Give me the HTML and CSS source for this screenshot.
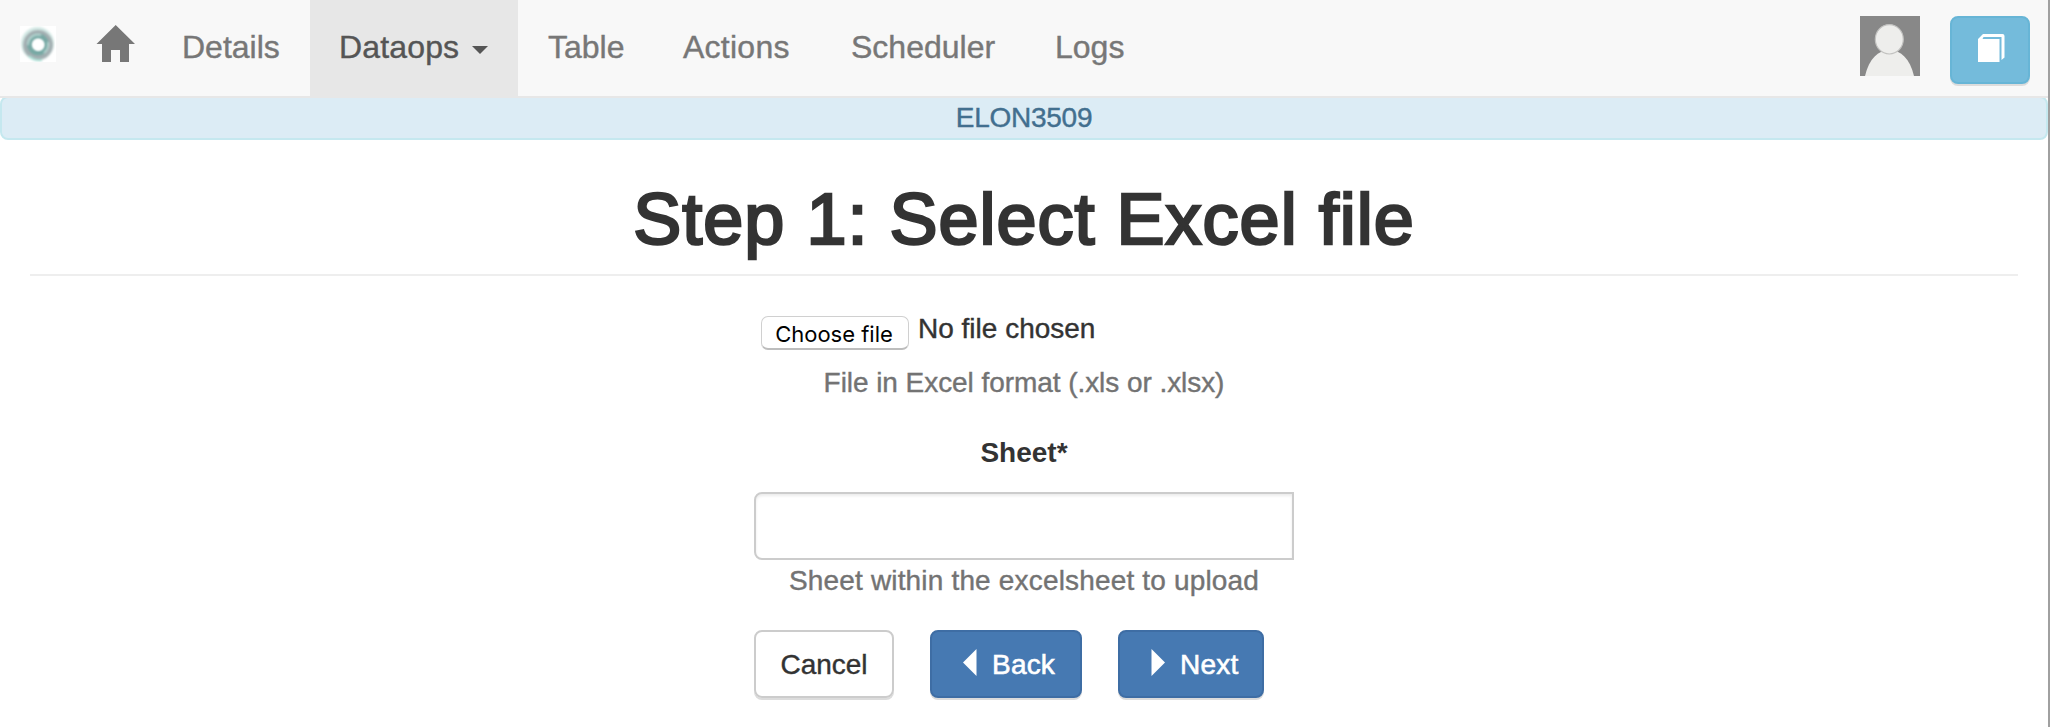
FILE: index.html
```html
<!DOCTYPE html>
<html lang="en">
<head>
<meta charset="utf-8">
<title>Select Excel file</title>
<link rel="stylesheet" href="styles.css">
</head>
<body>
<nav class="navbar">
  <a class="brand">
    <svg width="36" height="36" viewBox="0 0 36 36">
      <defs><filter id="soft"><feGaussianBlur stdDeviation=".9"/></filter></defs>
      <rect width="36" height="36" fill="#fff"/>
      <g fill="none" filter="url(#soft)">
        <circle cx="17.500" cy="17.500" r="14" stroke="#d3e9e5" stroke-width="5"/>
        <circle cx="18" cy="19" r="11.500" stroke="#a3aeb1" stroke-width="7"/>
        <circle cx="18" cy="18.500" r="8.500" stroke="#77a9a4" stroke-width="5"/>
        <path d="M8 19a10 10 0 0 1 13-10M28 16a11 11 0 0 1-4 11" stroke="#c3e0dc" stroke-width="1.500"/>
        <path d="M9 30a15 15 0 0 0 13 4" stroke="#a9dfd4" stroke-width="2"/>
      </g>
      <circle cx="18.500" cy="19" r="5.500" fill="#fff" filter="url(#soft)"/>
    </svg>
  </a>
  <a class="home">
    <svg width="40" height="38" viewBox="0 0 40 38"><path d="M19.700 0L39 19H33V37H24V25H15V37H6V19H0.500Z" fill="#777"/></svg>
  </a>
  <a class="item details">Details</a>
  <a class="item active"><span class="dataops">Dataops</span><span class="caret"></span></a>
  <a class="item table">Table</a>
  <a class="item actions">Actions</a>
  <a class="item scheduler">Scheduler</a>
  <a class="item logs">Logs</a>
  <div class="right">
    <svg class="avatar" width="60" height="60" viewBox="0 0 60 60">
      <rect width="60" height="60" fill="#888"/>
      <path d="M5 60C9 43 18 34 29.500 34S50 43 54 60Z" fill="#eeeeec"/>
      <ellipse cx="29.300" cy="23.300" rx="14" ry="14.700" fill="#eeeeec" stroke="#c2c2c0" stroke-width="1.200"/>
    </svg>
    <a class="docs">
      <svg width="27" height="28" viewBox="0 0 27 28">
        <path d="M0 28V5L5 0H24.500Q26.500 0 26.500 2V23.500L23.500 26V3H5.500L4.500 5H21.500V28Z" fill="#fff"/>
      </svg>
    </a>
  </div>
</nav>
<div class="alert"><span>ELON3509</span></div>
<main class="content">
  <h1 class="title"><span>Step 1: Select Excel file</span></h1>
  <form class="form">
    <div class="file-row"><span class="choose"><span>Choose file</span></span><span class="chosen">No file chosen</span></div>
    <p class="help file-help"><span>File in Excel format (.xls or .xlsx)</span></p>
    <label class="label" for="sheet">Sheet*</label>
    <input class="sheet" id="sheet" type="text">
    <p class="help sheet-help"><span>Sheet within the excelsheet to upload</span></p>
    <div class="actions-row">
      <a class="btn cancel">Cancel</a>
      <a class="btn primary back"><svg width="14" height="27" viewBox="0 0 14 27"><path d="M13.500 0V27L0 13.500Z" fill="#fff"/></svg><span>Back</span></a>
      <a class="btn primary next"><svg width="14" height="27" viewBox="0 0 14 27"><path d="M.5 0V27L14 13.500Z" fill="#fff"/></svg><span>Next</span></a>
    </div>
  </form>
</main>
</body>
</html>
```
FILE: styles.css
```css
* { box-sizing: border-box; }
html { background: #fff; }
body {
  margin: 0;
  height: 727px;
  overflow: hidden;
  border-right: 2px solid #a0a0a0;
  font-family: "Liberation Sans", Arial, sans-serif;
  font-size: 28px;
  line-height: 40px;
  color: #333;
  -webkit-text-stroke: .4px currentColor;
}
.navbar {
  position: relative;
  z-index: 1;
  display: flex;
  align-items: flex-start;
  height: 98px;
  background: #f8f8f8;
  border-bottom: 2px solid #e7e7e7;
}
.navbar svg { display: block; }
.brand { padding: 26px 0 0 20px; }
.home { padding: 25px 16px 0 40px; }
.item {
  height: 96px;
  padding: 27px 29px 29px 30px;
  font-size: 32px;
  color: #777;
  white-space: nowrap;
}
.details { width: 158px; }
.active {
  display: flex;
  width: 208px;
  padding-left: 29px;
  background: #e7e7e7;
  color: #555;
}
.dataops { letter-spacing: .15px; }
.caret {
  margin: 19px 0 0 13px;
  border: 8px solid transparent;
  border-top-color: #555;
  border-bottom: 0;
  height: 8px;
}
.table { width: 135px; }
.actions { width: 168px; letter-spacing: .25px; }
.scheduler { width: 204px; }
.right {
  display: flex;
  gap: 30px;
  margin: 16px 18px 0 auto;
}
.docs {
  display: flex;
  justify-content: center;
  width: 80px;
  height: 68px;
  padding: 16px 0 0 2px;
  border: 2px solid #67b5d6;
  border-radius: 8px;
  background: #74bbdb;
  box-shadow: 0 2px 0 #dcdcdc;
}
.alert {
  height: 44px;
  margin-top: -2px;
  border: 2px solid #c5e8ef;
  border-radius: 8px;
  background: #dcecf5;
  color: #426f8f;
  letter-spacing: -.25px;
  text-align: center;
}
.content { padding: 0 30px; }
.title {
  height: 136px;
  margin: 0;
  padding-top: 39px;
  border-bottom: 2px solid #eee;
  font-size: 72px;
  font-weight: 400;
  line-height: 80px;
  letter-spacing: 1px;
  -webkit-text-stroke: 2.600px #333;
  text-align: center;
}
.form {
  display: flex;
  flex-direction: column;
  width: 540px;
  margin: 0 auto;
}
.file-row {
  display: flex;
  height: 77px;
  padding: 33px 0 0 7px;
}
.choose {
  width: 148px;
  height: 34px;
  margin: 7px 9px 0 0;
  border: 1px solid #d0d0d0;
  border-bottom: 2px solid #bdbdbd;
  border-radius: 7px;
  background: #fff;
  color: #000;
  font-family: Inter, sans-serif;
  font-size: 22px;
  line-height: 35px;
  text-align: center;
  text-indent: -2px;
  -webkit-text-stroke: 0;
}
.chosen { white-space: nowrap; }
.help {
  margin: 0;
  color: #737373;
  text-align: center;
  white-space: nowrap;
}
.file-help { padding-top: 10px; letter-spacing: -.06px; }
.sheet-help { padding-top: 1px; letter-spacing: .17px; }
.label {
  margin-top: 30px;
  font-weight: 700;
  text-align: center;
  -webkit-text-stroke: 0;
}
.sheet {
  width: 540px;
  height: 68px;
  margin-top: 19px;
  border: 2px solid #ccc;
  border-radius: 8px 0 0 8px;
  background: #fff;
  box-shadow: inset 0 2px 3px rgba(0, 0, 0, .08);
}
.actions-row {
  display: flex;
  gap: 36px;
  margin-top: 29px;
}
.btn {
  display: flex;
  height: 68px;
  border: 2px solid #ccc;
  border-radius: 8px;
  line-height: 65px;
  box-shadow: 0 2px 0 #dcdcdc;
  white-space: nowrap;
}
.btn svg { margin: 17px 15px 0 0; }
.cancel {
  justify-content: center;
  width: 140px;
}
.primary {
  padding-left: 31px;
  border-color: #3e6da4;
  background: #4679b2;
  color: #fff;
  -webkit-text-stroke: .6px #fff;
}
.back { width: 152px; letter-spacing: .2px; }
.next { width: 146px; letter-spacing: .2px; }
```
